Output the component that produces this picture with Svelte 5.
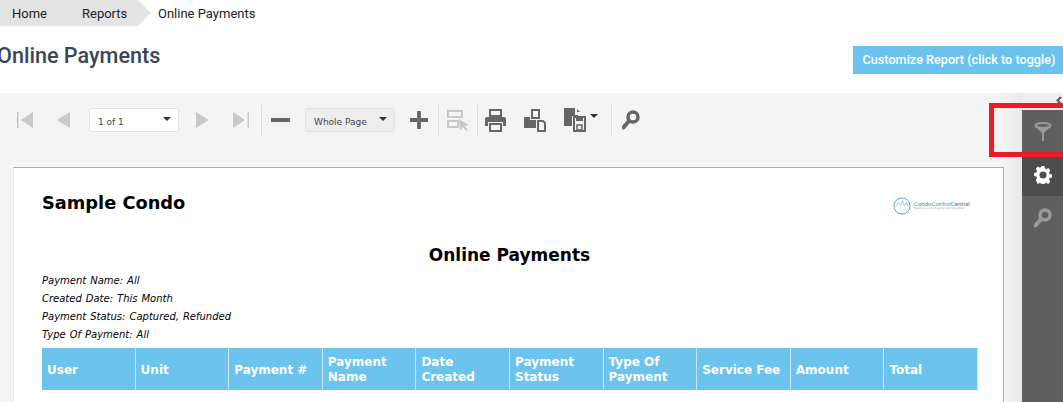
<script lang="ts">
  const columns = [
    ["User"],
    ["Unit"],
    ["Payment #"],
    ["Payment", "Name"],
    ["Date", "Created"],
    ["Payment", "Status"],
    ["Type Of", "Payment"],
    ["Service Fee"],
    ["Amount"],
    ["Total"],
  ];
  const filters = [
    "Payment Name: All",
    "Created Date: This Month",
    "Payment Status: Captured, Refunded",
    "Type Of Payment: All",
  ];
</script>

<div class="page">
  <nav class="crumbs">
    <span class="crumb home">Home</span>
    <span class="crumb reports">Reports</span>
    <span class="current">Online Payments</span>
  </nav>

  <header class="head">
    <h1>Online Payments</h1>
    <button class="customize">Customize Report (click to toggle)</button>
  </header>

  <section class="viewer">
    <div class="main">
      <div class="toolbar">
        <svg class="tb first" width="16" height="16" viewBox="0 0 16 16"><path d="M0 0h1.500v16H0zM16 0v16L4 8z" fill="#c8c8c8" /></svg>
        <svg class="tb prev" width="13" height="16" viewBox="0 0 13 16"><path d="M13 0v16L0 8z" fill="#c8c8c8" /></svg>
        <div class="select page-select"><span>1 of 1</span><i></i></div>
        <svg class="tb next" width="13" height="16" viewBox="0 0 13 16"><path d="M0 0v16l13-8z" fill="#c8c8c8" /></svg>
        <svg class="tb last" width="16" height="16" viewBox="0 0 16 16"><path d="M14.500 0H16v16h-1.500zM0 0v16l12-8z" fill="#c8c8c8" /></svg>
        <b class="sep sep-a"></b>
        <svg class="tb minus" width="19" height="4" viewBox="0 0 19 4"><path d="M0 0h19v4H0z" fill="#666" /></svg>
        <div class="select zoom-select"><span>Whole Page</span><i></i></div>
        <svg class="tb plus" width="18" height="18" viewBox="0 0 19 19"><path d="M7.500 0h4v7.500H19v4h-7.500V19h-4v-7.500H0v-4h7.500z" fill="#666" /></svg>
        <b class="sep sep-b"></b>
        <svg class="tb pick" width="22" height="21" viewBox="0 0 22 21">
          <path d="M1 1h14v6H1zM1 11h10v6H1z" fill="none" stroke="#c8c8c8" stroke-width="2" />
          <path d="M12 9l10 6-4 1 3 4-2 1-3-4-3 3z" fill="#c8c8c8" />
        </svg>
        <b class="sep sep-c"></b>
        <svg class="tb print" width="21" height="23" viewBox="0 0 21 23">
          <path d="M5 1h11v6H5z" fill="none" stroke="#666" stroke-width="2" />
          <path d="M2 8h17a2 2 0 0 1 2 2v7h-3v-4H3v4H0v-7a2 2 0 0 1 2-2z" fill="#666" />
          <path d="M5 15h11v7H5z" fill="none" stroke="#666" stroke-width="2" />
        </svg>
        <svg class="tb layout" width="22" height="23" viewBox="0 0 22 23">
          <path d="M8 1h7v8H8z" fill="none" stroke="#666" stroke-width="2" />
          <path d="M0 8h6v3h6v8H0z" fill="#666" />
          <path d="M14 12h5l2 2v8h-7z" fill="none" stroke="#666" stroke-width="2" />
        </svg>
        <svg class="tb save" width="22" height="24" viewBox="0 0 22 24">
          <path d="M0 0h11v7h3v1H8v10H0z" fill="#666" />
          <path d="M13 1l3 3h-3z" fill="#666" />
          <path d="M10 9h11v14H10z" fill="none" stroke="#666" stroke-width="2" />
          <path d="M12 9h7v4h-7z" fill="#666" />
          <path d="M13 17h5v5h-5z" fill="none" stroke="#666" stroke-width="1.500" />
        </svg>
        <i class="save-caret"></i>
        <b class="sep sep-d"></b>
        <svg class="tb find" width="18" height="20" viewBox="0 0 18 20">
          <circle cx="11" cy="7" r="5" fill="none" stroke="#666" stroke-width="3.500" />
          <path d="M7 11L1.500 17.500" stroke="#666" stroke-width="4" stroke-linecap="round" />
        </svg>
      </div>

      <article class="paper">
        <div class="top">
          <h2>Sample Condo</h2>
          <div class="logo">
            <svg width="18" height="18" viewBox="0 0 19 19">
              <circle cx="9.500" cy="9.500" r="8.500" fill="none" stroke="#4aa6cc" />
              <path d="M3 10l3-4 2 3 2-5 2 5 2-3 2 4" fill="none" stroke="#8fc4da" />
            </svg>
            <div class="logo-text">
              <span class="brand">Condo<em>Control</em><u>Central</u></span>
              <span class="tag">making your property run smoother</span>
            </div>
          </div>
        </div>
        <h3>Online Payments</h3>
        <div class="filters">
          {#each filters as f}
            <p>{f}</p>
          {/each}
        </div>
        <div class="table-head">
          {#each columns as lines}
            <div class="cell">
              {#each lines as line}
                <span>{line}</span>
              {/each}
            </div>
          {/each}
        </div>
      </article>
    </div>

    <aside class="side">
      <div class="collapse">
        <svg width="6" height="9" viewBox="0 0 6 9"><path d="M5 1L1.500 4.500 5 8" fill="none" stroke="#555" stroke-width="2" /></svg>
      </div>
      <div class="tab filter-tab">
        <svg width="18" height="19" viewBox="0 0 18 19">
          <ellipse cx="9" cy="3.500" rx="7.500" ry="2.500" fill="none" stroke="#9a9a9a" stroke-width="2" />
          <path d="M2 5l6 6v8h2v-8l6-6z" fill="#9a9a9a" />
        </svg>
      </div>
      <div class="tab gear-tab">
        <svg width="18" height="18" viewBox="0 0 18 18">
          <path d="M7.300 0h3.400l.4 2.500 1.500.7 2.200-1.300 2.300 2.400-1.300 2.100.6 1.500 2.600.5v3.200l-2.600.5-.6 1.500 1.300 2.100-2.300 2.400-2.200-1.300-1.500.7-.4 2.500H7.300l-.4-2.500-1.500-.7-2.200 1.300L.9 14.200l1.300-2.100-.6-1.500L-1 10.100V6.900l2.600-.5.600-1.500L.9 2.800l2.300-2.400 2.200 1.300 1.500-.7z" transform="translate(1 0) scale(.89 1)" fill="#fff" />
          <circle cx="9" cy="9" r="3.500" fill="#4d4d4d" />
        </svg>
      </div>
      <div class="tab find-tab">
        <svg width="18" height="20" viewBox="0 0 18 20">
          <circle cx="11" cy="7" r="5" fill="none" stroke="#9a9a9a" stroke-width="3.500" />
          <path d="M7 11L1.500 17.500" stroke="#9a9a9a" stroke-width="4" stroke-linecap="round" />
        </svg>
      </div>
    </aside>
  </section>

  <div class="marker"></div>
</div>

<style>
  :global(body) {
    margin: 0;
    background: #fff;
  }

  .page {
    position: relative;
    width: 1063px;
    height: 402px;
    overflow: hidden;
    font-family: Roboto, sans-serif;
    color: #222;
  }

  .crumbs {
    display: flex;
    align-items: center;
    height: 26px;
    font-size: 13px;
  }

  .crumb {
    display: flex;
    align-items: center;
    height: 26px;
    background: #e3e3e3;
    box-sizing: border-box;
  }

  .home {
    width: 68px;
    padding-left: 12px;
    clip-path: polygon(0 0, 56px 0, 68px 13px, 56px 26px, 0 26px);
  }

  .reports {
    width: 96px;
    margin-left: -13px;
    padding-left: 27px;
    clip-path: polygon(0 0, 83px 0, 96px 13px, 83px 26px, 0 26px, 13px 13px);
  }

  .current {
    margin-left: 7px;
  }

  .head {
    display: flex;
    justify-content: space-between;
    height: 67px;
  }

  h1 {
    margin: 17px 0 0 -3px;
    font-size: 21.600px;
    line-height: 26px;
    font-weight: 500;
    color: #3a4657;
  }

  .customize {
    margin: 20px 0 0;
    width: 210px;
    height: 28px;
    padding: 0 0 2px 2px;
    border: 0;
    background: #6cc2ee;
    color: #fff;
    font: 500 12.670px Roboto, sans-serif;
    white-space: nowrap;
  }

  .viewer {
    display: flex;
    height: 309px;
    background: #f4f4f4;
  }

  .main {
    width: 1022px;
    flex: none;
    background: linear-gradient(to right, #f4f4f4 1000px, #e9e9e9 1022px);
  }

  .toolbar {
    display: flex;
    align-items: center;
    height: 54px;
    margin-bottom: 20px;
    padding-left: 17px;
    box-sizing: border-box;
  }

  .tb {
    flex: none;
  }

  .prev {
    margin-left: 24px;
  }

  .page-select {
    margin-left: 19px;
    width: 90px;
    background: #fff;
  }

  .next {
    margin-left: 17px;
  }

  .last {
    margin-left: 24px;
  }

  .sep {
    flex: none;
    width: 1px;
    height: 31px;
    background: #dcdcdc;
  }

  .sep-a {
    margin-left: 12px;
  }

  .minus {
    margin-left: 9px;
  }

  .zoom-select {
    margin-left: 15px;
    width: 90px;
    background: #eee;
  }

  .plus {
    margin-left: 15px;
  }

  .sep-b {
    margin-left: 10px;
  }

  .pick {
    margin-left: 8px;
  }

  .sep-c {
    margin-left: 8px;
  }

  .print {
    margin-left: 7px;
  }

  .layout {
    margin-left: 18px;
  }

  .save {
    margin-left: 18px;
  }

  .save-caret {
    flex: none;
    align-self: flex-start;
    margin: 21px 0 0 4px;
    border: 4px solid transparent;
    border-top: 4px solid #333;
    border-bottom: 0;
  }

  .sep-d {
    margin-left: 13px;
  }

  .find {
    margin-left: 10px;
  }

  .select {
    flex: none;
    position: relative;
    display: flex;
    align-items: center;
    height: 24px;
    box-sizing: border-box;
    padding: 3px 0 0 8px;
    border: 1px solid #e2e2e2;
    border-radius: 3px;
    font-family: "DejaVu Sans", sans-serif;
    font-size: 9px;
    color: #444;
  }

  .select i {
    position: absolute;
    right: 7px;
    top: 8px;
    border: 4px solid transparent;
    border-top: 4px solid #333;
    border-bottom: 0;
  }

  .paper {
    margin-left: 13px;
    width: 991px;
    height: 235px;
    box-sizing: border-box;
    padding: 0 26px 0 28px;
    background: #fff;
    border: 1px solid #aaa;
    border-width: 1px 1px 0 1px;
    border-left-color: #e4e4e4;
    font-family: "DejaVu Sans", sans-serif;
    color: #000;
  }

  .top {
    display: flex;
    justify-content: space-between;
    height: 78px;
  }

  h2 {
    margin: 24px 0 0;
    font-size: 17.800px;
    line-height: 21px;
    font-weight: 700;
  }

  .logo {
    display: flex;
    align-items: center;
    gap: 3px;
    height: 19px;
    margin: 28px 7px 0 0;
  }

  .logo-text {
    display: flex;
    flex-direction: column;
    width: 56px;
    line-height: 1;
    white-space: nowrap;
  }

  .brand {
    font-family: Roboto, sans-serif;
    font-size: 6.200px;
    letter-spacing: -.1px;
    color: #3f8fb3;
  }

  .brand em {
    font-style: normal;
    color: #4aa6cc;
  }

  .brand u {
    text-decoration: none;
    color: #777;
  }

  .tag {
    font-size: 2.800px;
    color: #999;
  }

  h3 {
    margin: 0;
    height: 26px;
    font-size: 17px;
    line-height: 19px;
    font-weight: 700;
    text-align: center;
  }

  .filters {
    height: 76px;
  }

  .filters p {
    margin: 0;
    height: 18px;
    font-size: 10px;
    line-height: 18px;
    font-style: italic;
    word-spacing: .8px;
  }

  .table-head {
    display: grid;
    grid-template-columns: repeat(10, 1fr);
    width: 936px;
    height: 42px;
    background: #6cc3ee;
  }

  .cell {
    display: flex;
    flex-direction: column;
    justify-content: center;
    box-sizing: border-box;
    padding: 2px 0 0 5px;
    border-right: 1px solid #c4e6f7;
    color: #fff;
    font-size: 12px;
    line-height: 15px;
    font-weight: 700;
    white-space: nowrap;
  }

  .side {
    flex: 1;
    display: flex;
    flex-direction: column;
    background: #5f5f5f;
  }

  .collapse {
    flex: none;
    display: flex;
    justify-content: flex-end;
    align-items: flex-start;
    height: 17px;
    padding-right: 1px;
    padding-top: 3px;
    box-sizing: border-box;
    background: #eee;
  }

  .tab {
    display: flex;
    justify-content: center;
    align-items: center;
    box-sizing: border-box;
  }

  .filter-tab {
    height: 47px;
    padding-bottom: 5px;
  }

  .gear-tab {
    height: 39px;
    padding-bottom: 3px;
    background: #4d4d4d;
  }

  .find-tab {
    height: 43px;
  }

  .marker {
    position: absolute;
    left: 989px;
    top: 103px;
    width: 74px;
    height: 54px;
    box-sizing: border-box;
    border: 5px solid #ed1c24;
    border-right: 0;
  }
</style>
